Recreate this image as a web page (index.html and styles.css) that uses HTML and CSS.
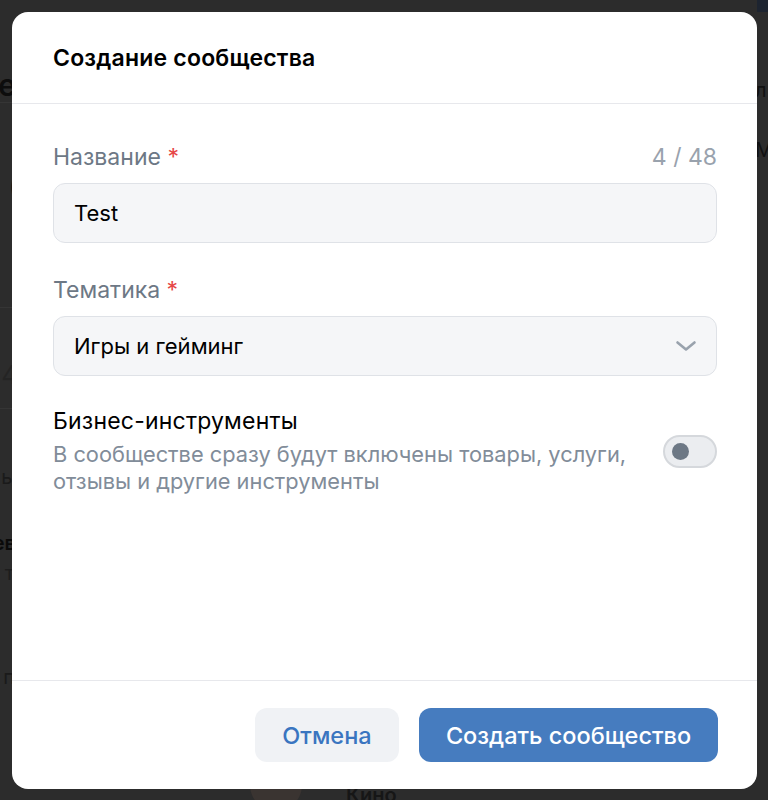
FILE: index.html
```html
<!DOCTYPE html>
<html lang="ru">
<head>
<meta charset="utf-8">
<title>Создание сообщества</title>
<link rel="stylesheet" href="styles.css">
</head>
<body>
<div class="page">
  <div class="strip strip-left">
    <div class="frag f-e">е</div>
    <div class="frag-line l1"></div>
    <div class="frag f-paren">(</div>
    <div class="frag-line l2"></div>
    <div class="frag f-4">4</div>
    <div class="frag-line l3"></div>
    <div class="frag f-y">ы</div>
    <div class="frag f-ev">ев</div>
    <div class="frag f-t">т</div>
    <div class="frag f-p">п</div>
  </div>

  <div class="center">
    <div class="modal">
      <header class="modal-head">
        <h1 class="modal-title">Создание сообщества</h1>
      </header>

      <div class="modal-body">
        <div class="field">
          <div class="field-top">
            <span class="field-label">Название <span class="req">*</span></span>
            <span class="counter">4 / 48</span>
          </div>
          <div class="input">Test</div>
        </div>

        <div class="field field-second">
          <div class="field-top">
            <span class="field-label">Тематика <span class="req">*</span></span>
          </div>
          <div class="input select">
            <span>Игры и гейминг</span>
            <svg class="chevron" width="24" height="24" viewBox="0 0 24 24" fill="none">
              <path d="M3.5 8.5 L12 15.5 L20.5 8.5" stroke="#99a2ad" stroke-width="2.6" stroke-linecap="round" stroke-linejoin="round"/>
            </svg>
          </div>
        </div>

        <div class="switch-row">
          <div class="switch-text">
            <div class="switch-title">Бизнес-инструменты</div>
            <div class="switch-sub">В сообществе сразу будут включены товары, услуги, отзывы и другие инструменты</div>
          </div>
          <div class="toggle"><span class="knob"></span></div>
        </div>
      </div>

      <footer class="modal-foot">
        <button class="btn btn-secondary">Отмена</button>
        <button class="btn btn-primary">Создать сообщество</button>
      </footer>
    </div>
    <div class="below">
      <span class="below-avatar"></span>
      <span class="below-text">Кино</span>
    </div>
  </div>

  <div class="strip strip-right">
    <div class="navy"></div>
    <div class="frag r-l">л</div>
    <div class="frag r-me">Ме</div>
  </div>
</div>
</body>
</html>
```
FILE: styles.css
```css
* { box-sizing: border-box; }

html, body {
  margin: 0;
  padding: 0;
  background: #2c2c2c;
  font-family: "Inter", "Roboto", "Noto Sans", sans-serif;
}

.page {
  display: grid;
  grid-template-columns: 12px 745px 11px;
  height: 800px;
  overflow: hidden;
}

/* backdrop fragments (page behind the dimmed overlay) */
.strip {
  display: flex;
  flex-direction: column;
  overflow: hidden;
  white-space: nowrap;
}
.strip-left { align-items: flex-end; }
.strip-right { align-items: flex-start; }

.frag { color: #0d0d0d; font-size: 20px; line-height: 24px; }
.frag-line { align-self: stretch; height: 1px; background: #353535; }

.f-e { margin-top: 70px; font-size: 30px; line-height: 30px; font-weight: 600; margin-right: -4px; }
.l1 { margin-top: 2px; }
.f-paren { margin-top: 68px; font-size: 26px; line-height: 30px; margin-right: -6px; color: #151515; }
.l2 { margin-top: 106px; }
.f-4 { margin-top: 52px; font-size: 26px; line-height: 30px; color: #242424; margin-right: -6px; }
.l3 { margin-top: 18px; }
.f-y { margin-top: 56px; color: #1a1a1a; margin-right: -4px; }
.f-ev { margin-top: 42px; font-weight: 600; color: #0a0a0a; margin-right: -4px; }
.f-t { margin-top: 6px; color: #1d1d1d; margin-right: -2px; }
.f-p { margin-top: 80px; color: #1a1a1a; margin-right: -3px; }

.navy { width: 100%; height: 12px; background: #1d2430; }
.r-l { margin-top: 66px; margin-left: -2px; color: #111; }
.r-me { margin-top: 36px; margin-left: -2px; color: #111; }

.center {
  display: flex;
  flex-direction: column;
  overflow: hidden;
}

.below {
  height: 11px;
  display: flex;
  align-items: flex-start;
  overflow: hidden;
  padding-left: 238px;
  gap: 44px;
}
.below-avatar {
  width: 52px;
  height: 52px;
  margin-top: -30px;
  border-radius: 50%;
  background: #3a3431;
  flex-shrink: 0;
}
.below-text {
  margin-top: -4px;
  font-size: 20px;
  line-height: 20px;
  font-weight: 600;
  color: #161616;
}

/* modal */
.modal {
  margin-top: 12px;
  height: 777px;
  flex-shrink: 0;
  background: #ffffff;
  border-radius: 16px;
  display: flex;
  flex-direction: column;
  overflow: hidden;
}

.modal-head {
  height: 92px;
  border-bottom: 1px solid #e7e8ec;
  display: flex;
  align-items: center;
  padding: 0 41px;
}

.modal-title {
  margin: 0;
  margin-top: 1px;
  font-size: 23px;
  line-height: 28px;
  font-weight: 600;
  color: #000;
  letter-spacing: 0.2px;
}

.modal-body {
  flex: 1;
  padding: 41px 40px 0 41px;
}

.field-top {
  display: flex;
  justify-content: space-between;
  align-items: center;
  height: 24px;
  margin-bottom: 14px;
}

.field-label {
  font-size: 23px;
  line-height: 28px;
  color: #6d7885;
}
.req { color: #e64646; }

.counter {
  font-size: 23px;
  line-height: 28px;
  color: #99a2ad;
}

.input {
  height: 60px;
  background: #f5f6f8;
  border: 1px solid #dfe2e7;
  border-radius: 12px;
  padding: 0 20px;
  display: flex;
  align-items: center;
  font-size: 22px;
  color: #000;
}

.field-second { margin-top: 35px; }

.select { justify-content: space-between; padding-right: 18px; }
.chevron { display: block; }

.switch-row {
  margin-top: 31px;
  display: flex;
  align-items: center;
  justify-content: space-between;
}

.switch-title {
  font-size: 23px;
  line-height: 28px;
  letter-spacing: 0.2px;
  color: #000;
}
.switch-sub {
  margin-top: 6px;
  font-size: 21.8px;
  line-height: 27px;
  color: #818c99;
  max-width: 600px;
}

.toggle {
  width: 54px;
  height: 33px;
  border-radius: 17px;
  background: #ebedf0;
  border: 2px solid #d5d8dc;
  display: flex;
  align-items: center;
  padding-left: 7px;
  flex-shrink: 0;
}
.knob {
  width: 17px;
  height: 17px;
  border-radius: 50%;
  background: #6d7885;
}

.modal-foot {
  border-top: 1px solid #e7e8ec;
  padding: 27px 39px 27px 0;
  display: flex;
  justify-content: flex-end;
  gap: 20px;
}

.btn {
  height: 54px;
  border: none;
  border-radius: 12px;
  font-family: inherit;
  font-size: 23.5px;
  font-weight: 500;
  padding: 0;
}
.btn-secondary {
  width: 144px;
  background: #f0f2f5;
  color: #3a75c0;
}
.btn-primary {
  width: 299px;
  background: #467cbf;
  color: #ffffff;
}
```
